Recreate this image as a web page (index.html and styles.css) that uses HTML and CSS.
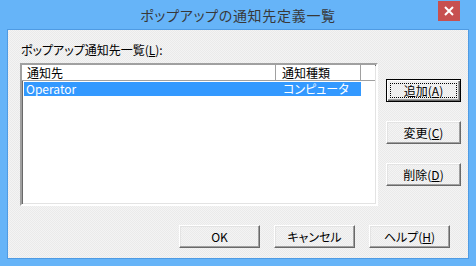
FILE: index.html
```html
<!DOCTYPE html>
<html lang="ja">
<head>
<meta charset="utf-8">
<title>ポップアップの通知先定義一覧</title>
<link rel="stylesheet" href="styles.css">
</head>
<body>
<div class="window">
  <div class="titlebar">
    <span class="spacer"></span>
    <span class="title">ポップアップの通知先定義一覧</span>
    <span class="close-wrap"><span class="close"><svg width="10" height="10" viewBox="0 0 10 10"><path d="M1 1L9 9M9 1L1 9" stroke="#fff" stroke-width="2"/></svg></span></span>
  </div>
  <div class="client">
    <div class="label">ポップアップ通知先一覧(<u>L</u>):</div>
    <div class="main">
      <div class="listbox">
        <div class="header">
          <div class="hcell hc1">通知先</div>
          <div class="hcell hc2">通知種類</div>
          <div class="hcell hfill"></div>
        </div>
        <div class="row selected">
          <div class="cell c1">Operator</div>
          <div class="cell c2">コンピュータ</div>
        </div>
      </div>
      <div class="side">
        <div class="btn side-btn default"><span class="focus">追加(<u>A</u>)</span></div>
        <div class="btn side-btn">変更(<u>C</u>)</div>
        <div class="btn side-btn">削除(<u>D</u>)</div>
      </div>
    </div>
    <div class="footer">
      <div class="btn foot-btn">OK</div>
      <div class="btn foot-btn">キャンセル</div>
      <div class="btn foot-btn">ヘルプ(<u>H</u>)</div>
    </div>
  </div>
</div>
</body>
</html>
```
FILE: styles.css
```css
* { box-sizing: border-box; }
html, body { margin: 0; padding: 0; }
body {
  width: 476px;
  height: 266px;
  overflow: hidden;
  font-family: "Noto Sans CJK JP", sans-serif;
  font-feature-settings: "palt";
  font-size: 12px;
  color: #000;
}
.window {
  width: 476px;
  height: 266px;
  background: #66b4f8;
  display: flex;
  flex-direction: column;
}
.titlebar {
  height: 29px;
  display: grid;
  grid-template-columns: 1fr auto 1fr;
  align-items: start;
}
.title {
  font-size: 14px;
  line-height: 31px;
  color: #383838;
  letter-spacing: 0.7px;
}
.close-wrap {
  display: flex;
  justify-content: flex-end;
  padding-right: 16px;
  padding-top: 1px;
}
.close {
  width: 22px;
  height: 20px;
  background: #c75050;
  display: flex;
  align-items: center;
  justify-content: center;
}
.client {
  margin: 0 7px;
  height: 230px;
  border: 1px solid #4f9be3;
  background-color: #f0f0f0;
  background-image: repeating-conic-gradient(#f4f4f4 0 25%, #eaeaea 0 50%);
  background-size: 2px 2px;
  display: flex;
  flex-direction: column;
}
.label {
  margin: 13px 0 0 13px;
  line-height: 14px;
  height: 14px;
}
u { text-decoration: underline; text-underline-offset: 1px; }
.main {
  display: flex;
  margin-top: 6px;
}
.listbox {
  margin-left: 12px;
  width: 358px;
  height: 143px;
  background: #fff;
  border-style: solid;
  border-width: 2px;
  border-color: #a0a0a0 #ffffff #ffffff #a0a0a0;
  box-shadow: inset 1px 1px 0 #696969, inset -1px -1px 0 #e3e3e3;
  padding: 1px 1px 0 1px;
  display: flex;
  flex-direction: column;
}
.header {
  display: flex;
  height: 16px;
  margin-left: -1px;
  margin-top: -1px;
}
.hcell {
  height: 16px;
  line-height: 15px;
  background: #fff;
  border-right: 1px solid #a0a0a0;
  border-bottom: 1px solid #a0a0a0;
  box-shadow: inset 1px 0 0 #fff;
  white-space: nowrap;
}
.hc1 { width: 254px; padding-left: 5px; }
.hc2 { width: 85px; padding-left: 6px; }
.hfill { flex: 1; border-right: none; }
.row {
  display: flex;
  height: 14px;
  margin-top: 1px;
  margin-left: 1px;
  width: 337px;
  line-height: 14px;
}
.row.selected { background: #3399ff; color: #fff; }
.cell { white-space: nowrap; }
.c1 { width: 252px; padding-left: 2px; }
.c2 { width: 85px; padding-left: 7px; }
.side {
  margin-left: 8px;
  padding-top: 16px;
  display: flex;
  flex-direction: column;
  gap: 19px;
}
.btn {
  height: 23px;
  display: flex;
  align-items: center;
  justify-content: center;
  background-color: #f0f0f0;
  background-image: repeating-conic-gradient(#f4f4f4 0 25%, #eaeaea 0 50%);
  background-size: 2px 2px;
  border: 1px solid;
  border-color: #ffffff #696969 #696969 #ffffff;
  box-shadow: inset -1px -1px 0 #a0a0a0, inset 1px 1px 0 #e3e3e3;
  line-height: 14px;
  white-space: nowrap;
}
.side-btn { width: 75px; }
.btn.default {
  border: 1px solid #000;
  box-shadow: inset 1px 1px 0 #fff, inset -1px -1px 0 #696969, inset -2px -2px 0 #a0a0a0;
  padding: 3px;
}
.focus {
  flex: 1;
  align-self: stretch;
  display: flex;
  align-items: center;
  justify-content: center;
  border: 1px dotted #000;
}
.footer {
  display: flex;
  justify-content: flex-end;
  gap: 14px;
  margin-top: 19px;
  padding-right: 18px;
}
.foot-btn { width: 81px; }
```
